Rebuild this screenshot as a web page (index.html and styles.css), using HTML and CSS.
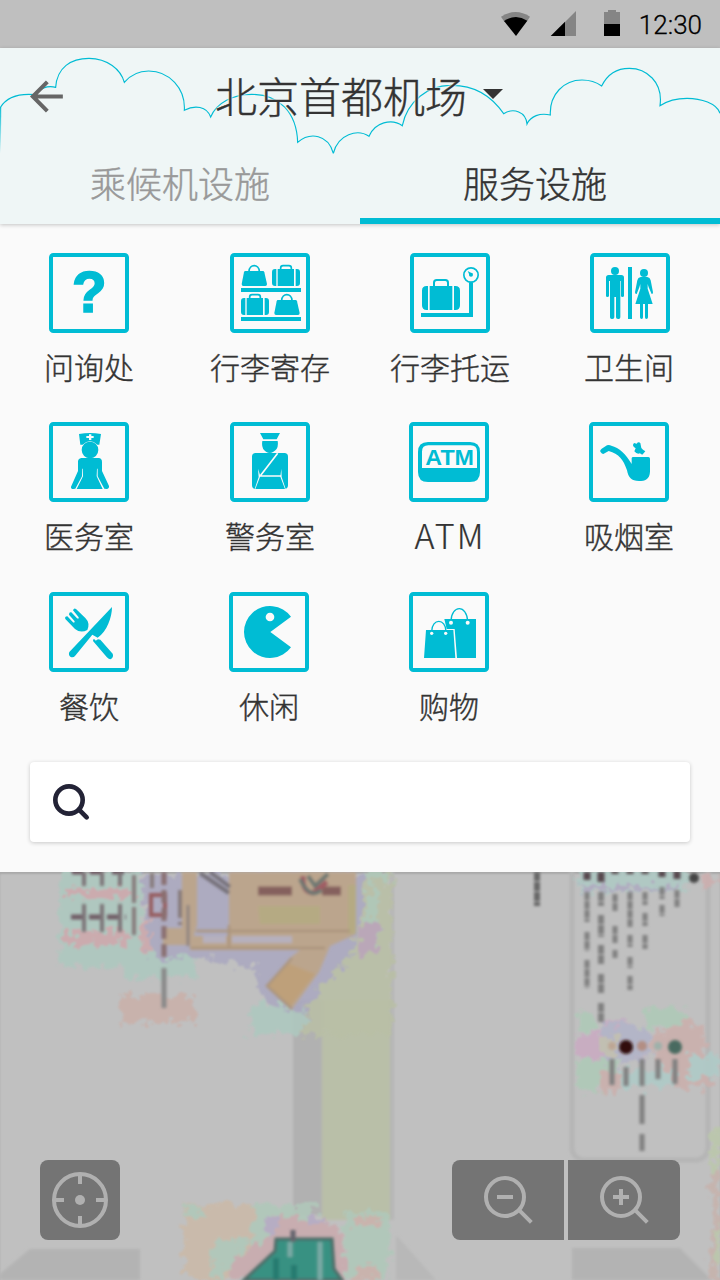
FILE: index.html
```
<!DOCTYPE html>
<html lang="zh-CN">
<head>
<meta charset="utf-8">
<title>北京首都机场</title>
<link rel="stylesheet" href="styles.css">
</head>
<body>
<div class="status">
  <svg class="status-icons" viewBox="1500 0 366 144">
    <path fill="#858585" d="M1503 50Q1547 22 1590 50L1580 65H1513Z"/><path d="M1512 63Q1547 40 1582 62L1548 108Z"/>
    <path fill="#858585" d="M1728 33V108H1695V66Z"/><path d="M1652 108L1695 65V108Z"/>
    <path fill="#858585" d="M1812 36H1824V30H1848V36H1860V72H1812Z"/><path d="M1812 72H1860V108H1812Z"/>
  </svg>
  <span class="time">12:30</span>
</div>
<header class="header">
  <svg class="clouds" viewBox="0 144 2160 528">
    <defs><linearGradient id="fade" gradientUnits="userSpaceOnUse" x1="0" y1="320" x2="0" y2="460"><stop stop-color="#00bcd4"/><stop offset="1" stop-color="#00bcd4" stop-opacity="0"/></linearGradient></defs>
    <path stroke="url(#fade)" d="M1 460L2 322"/>
    <path stroke="#00bcd4" d="M0 324C20 290 60 280 105 284C118 266 142 255 167 262C171 202 213 175 267 175C322 176 362 207 373 247C395 221 420 213 446 213C507 213 557 265 553 331C585 314 620 319 632 351C650 308 700 283 755 283C838 283 890 337 893 427C930 395 985 403 1000 460C1014 402 1073 386 1107 409C1124 367 1175 354 1207 377C1222 303 1286 256 1350 256C1429 254 1478 293 1511 341C1541 322 1578 336 1581 372C1592 348 1620 338 1651 345C1648 283 1692 240 1746 240C1770 240 1790 247 1805 258C1822 223 1853 205 1888 205C1938 205 1990 245 1980 317C2003 302 2031 295 2061 295C2103 295 2150 310 2160 340"/>
  </svg>
  <div class="titlebar">
    <svg class="back" viewBox="90 235 102 106"><path fill="none" stroke="#666" stroke-width="12" d="M142 244L98 288L142 332M98 288H189"/></svg>
    <h1 class="title">北京首都机场</h1>
    <i class="caret"></i>
  </div>
  <nav class="tabs"><a class="tab">乘候机设施</a><a class="tab active">服务设施</a></nav>
</header>
<main class="panel">
  <div class="grid">
    <div class="item left"><svg class="icon" viewBox="57 39 240 240"><rect class="frame" x="63" y="45" width="228" height="228" rx="7"/><text x="178" y="217" text-anchor="middle" class="question">?</text></svg><span>问询处</span></div>
    <div class="item"><svg class="icon" viewBox="600 39 240 240"><rect class="frame" x="606" y="45" width="228" height="228" rx="7"/>
      <path d="M633 144H813V156H633ZM633 231H813V243H633Z"/>
      <g id="bag"><path d="M645 93H699Q702 93 703 97L711 132Q711 138 706 138H640Q635 138 635 132L642 97Q643 93 645 93Z"/><path class="line5" d="M657 94C658 71 687 71 688 94"/></g>
      <g id="case"><path d="M743 87H792V138H743ZM739 87V138H735Q726 138 726 129V96Q726 87 735 87ZM797 87V138H801Q810 138 810 129V96Q810 87 801 87Z"/><path class="line5" d="M752 89V84Q752 77 759 77H777Q784 77 784 84V89"/></g>
      <use href="#bag" x="98" y="87"/><use href="#case" x="-93" y="87"/></svg><span>行李寄存</span></div>
    <div class="item"><svg class="icon" viewBox="60 39 240 240"><rect class="frame" x="66" y="45" width="228" height="228" rx="7"/>
      <path d="M119 138H187V210H119ZM114 138V210H110Q96 210 96 196V152Q96 138 110 138ZM192 138V210H196Q210 210 210 196V152Q210 138 196 138ZM93 219H237V127H249V231H93Z"/><path class="line6" d="M132 140V128Q132 120 140 120H166Q174 120 174 128V140"/><circle class="line5" cx="243" cy="105" r="21.5"/><circle cx="243" cy="104" r="6"/><path d="M233 93L248 101L240 109Z"/></svg><span>行李托运</span></div>
    <div class="item up"><svg class="icon" viewBox="600 39 240 240"><rect class="frame" x="606" y="45" width="228" height="228" rx="7"/>
      <circle cx="675" cy="93" r="12"/><path d="M656 105H694Q702 105 702 113V167Q702 171 697 171Q693 171 693 167V123H691V232Q691 237 686 237H684Q678 237 678 232V171H673V232Q673 237 667 237H665Q660 237 660 232V123H657V167Q657 171 652 171Q648 171 648 167V113Q648 105 656 105ZM714 81H726V237H714Z"/><circle cx="762" cy="99" r="12"/><path d="M752 111H772Q780 112 782 121L789 157Q789 163 785 162L776 142L773 132V146L788 192H774V232Q774 237 769 237Q765 237 765 232V192H759V232Q759 237 755 237Q750 237 750 232V192H736L751 146V132L748 142L740 162Q735 163 735 157L742 121Q744 112 752 111Z"/></svg><span>卫生间</span></div>
    <div class="item left"><svg class="icon" viewBox="57 36 240 240"><rect class="frame" x="63" y="42" width="228" height="228" rx="7"/>
      <path d="M147 72Q180 66 213 72L208 104H202Q180 84 158 104H151ZM154 144H206Q216 145 216 156V183L237 228Q238 236 230 237L223 236L203 199V176H201L200 199L218 237H140L159 199L158 176H156V199L136 236L130 237Q122 237 123 230L144 183V155Q144 146 154 144Z"/><circle cx="180" cy="120" r="25"/><path class="white" d="M177 73H184V78H191V84H184V90H177V84H169V78H177Z"/></svg><span>医务室</span></div>
    <div class="item"><svg class="icon" viewBox="600 36 240 240"><rect class="frame" x="606" y="42" width="228" height="228" rx="7"/>
      <path d="M690 69H750L740 88H700ZM697 93H743Q747 118 729 126Q719 132 708 125Q693 116 697 93ZM677 129H763Q774 129 774 140V226Q774 237 763 237H677Q666 237 666 226V140Q666 129 677 129Z"/><path class="cut" d="M743 130L691 197M687 198H753"/><path class="white" d="M684 176L691 198L676 237H674L686 201ZM754 176L755 201L767 237H765L751 200Z"/></svg><span>警务室</span></div>
    <div class="item left"><svg class="icon" viewBox="57 36 240 240"><rect class="frame" x="63" y="42" width="228" height="228" rx="7"/>
      <path fill-rule="evenodd" d="M114 96H240Q270 96 270 126V186Q270 216 240 216H114Q84 216 84 186V126Q84 96 114 96ZM96 174H261V125Q261 106 242 106H115Q96 106 96 125Z"/><text class="atm" x="106" y="164" textLength="146" lengthAdjust="spacingAndGlyphs">ATM</text></svg><span class="latin">ATM</span></div>
    <div class="item left"><svg class="icon" viewBox="597 36 240 240"><rect class="frame" x="603" y="42" width="228" height="228" rx="7"/>
      <path d="M631 125Q629 121 635 116L651 106Q657 103 664 107C687 112 709 134 725 162V145Q725 141 730 141H775Q780 141 780 146V185C779 208 765 213 747 213C724 213 715 203 711 181C700 148 687 132 656 123L640 132Q636 132 631 125ZM732 99L740 101Q745 94 751 99L754 114Q758 120 766 124L759 132Q757 136 750 130Q741 134 733 124L737 115Q724 108 732 99Z"/></svg><span>吸烟室</span></div>
    <div class="item left"><svg class="icon" viewBox="57 36 240 240"><rect class="frame" x="63" y="42" width="228" height="228" rx="7"/>
      <path d="M246 81C246 111 231 155 203 173L187 164L135 228Q130 234 122 231Q114 225 118 216ZM129 91Q132 83 138 87L166 114Q181 129 172 150Q152 161 135 147L106 117Q103 110 112 109L129 127Q134 130 134 124L117 104Q117 95 124 97L141 115Q147 118 146 112ZM189 183L190 178Q195 176 197 182L204 178L211 179L248 221Q252 230 243 237Q236 239 230 231Z"/></svg><span>餐饮</span></div>
    <div class="item left"><svg class="icon" viewBox="597 36 240 240"><rect class="frame" x="603" y="42" width="228" height="228" rx="7"/><path d="M721 156L783 110A78 78 0 1 0 783 202Z"/><circle class="white" cx="720" cy="111" r="13"/></svg><span>休闲</span></div>
    <div class="item left"><svg class="icon" viewBox="57 36 240 240"><rect class="frame" x="63" y="42" width="228" height="228" rx="7"/>
      <path d="M163 117H258V234H201L194 147H170ZM108 150H190L196 234H102Z"/><path class="line4" d="M125 154C126 114 167 114 168 154M183 124C184 74 231 73 233 124"/><circle class="white" cx="125" cy="160" r="5"/><circle class="white" cx="167" cy="160" r="5"/><circle class="white" cx="183" cy="128" r="6"/><circle class="white" cx="233" cy="128" r="6"/></svg><span>购物</span></div>
  </div>
  <div class="search"><svg viewBox="156 129 114 114"><circle cx="207" cy="180" r="41" fill="none" stroke="#232336" stroke-width="14"/><path stroke="#232336" stroke-width="14" stroke-linecap="round" d="M237 209L260 232"/></svg></div>
</main>
<section class="map">
  <svg class="map-art" viewBox="0 872 720 408" preserveAspectRatio="none">
    <defs>
      <filter id="soft" x="-10%" y="-10%" width="120%" height="120%"><feGaussianBlur stdDeviation="1.6"/></filter>
      <filter id="wash" x="-10%" y="-10%" width="120%" height="120%"><feTurbulence type="fractalNoise" baseFrequency=".12" numOctaves="3" seed="4" result="n"/><feDisplacementMap in="SourceGraphic" in2="n" scale="22" xChannelSelector="R" yChannelSelector="G"/><feGaussianBlur stdDeviation="1.3"/></filter>
    </defs>
    <g filter="url(#soft)">
      <path fill="#b1b1b1" d="M293 1000H322V1215H293Z"/><path fill="#b9bfa8" d="M322 1000H390V1220H322Z"/><path fill="#b6b6b6" d="M390 872H394V1220H390Z"/>
      <path fill="#b3b3b3" d="M30 1249H140V1280H0V1274ZM572 1248H680L712 1280H572Z"/><path fill="#b8b8b8" d="M396 1235L436 1280H396Z"/>
      <rect x="572" y="852" width="136" height="308" rx="12" fill="none" stroke="#b5b5b5" stroke-width="5"/>
    </g>
    <g filter="url(#wash)" opacity=".9">
      <path fill="#aec8bf" d="M60 872H142V968H60ZM120 948H196V978H124ZM251 1004H306V1034H251ZM338 935H374V963H338Z"/>
      <path fill="#cda9ad" d="M66 888H132V898H66ZM64 931H128V945H64ZM140 920H151V952H140Z"/>
      <path fill="#c9b1aa" d="M120 996H194V1023H120Z"/>
      <path fill="#aba9c0" d="M140 875H370L355 950L344 974L303 1012L262 1000L254 968L205 958H152Z"/>
      <path fill="#b9bfa6" d="M364 872H392V1035H300L320 988L348 960L362 920Z"/>
      <path fill="#afc8b7" d="M363 872H390V882H363ZM366 890H379V945H366Z"/>
      <path fill="#baa5b8" d="M358 935L365 921H378V955H358Z"/>
      <path fill="#afc9c4" d="M578 868H687V892H578Z"/><path fill="#afabc1" d="M581 886H676V891H581Z"/><path fill="#cdafaf" d="M704 873H714V890H704Z"/>
      <path fill="#c9abc2" d="M577 1035L597 1032L606 1021H632L650 1035V1056L627 1062L577 1058Z"/>
      <path fill="#b2b4c8" d="M602 1025L632 1022L651 1034V1055L625 1063L602 1059Z"/>
      <path fill="#c2bfb1" d="M598 1036H617V1056H598Z"/>
      <path fill="#afc9b8" d="M577 1012H596V1031H577ZM645 1008H685V1028H645ZM577 1060H620V1090H577Z"/>
      <path fill="#cbb0ad" d="M652 1034L689 1021L705 1030V1054L714 1061V1087H674L666 1071L652 1062ZM600 1070H620V1091H600Z"/>
      <path fill="#afcac7" d="M689 1056H718V1078H689ZM620 1069H674V1087H620Z"/>
      <path fill="#cbbaa9" d="M184 1204H295V1230L255 1250L226 1280H184Z"/><path fill="#b0c8ba" d="M185 1206H206V1217H185ZM212 1239H250L237 1260L213 1280ZM345 1212H389V1280H345ZM255 1204H315V1235L250 1250Z"/>
      <path fill="#c9acaf" d="M229 1264L266 1237L276 1216L328 1219L344 1238L345 1280H229Z"/><path fill="#b6abc4" d="M265 1220L272 1214L280 1229L269 1240ZM306 1217H325V1224H306Z"/><path fill="#cbb2ac" d="M355 1216H378V1228H355ZM355 1266H378V1280H355Z"/>
      <path fill="#c6b3ad" d="M711 1170H720V1280H711Z"/><path fill="#bbc7ac" d="M712 1130H720V1170H712ZM715 1226H720V1265H715Z"/>
    </g>
    <g filter="url(#soft)">
      <path fill="#bba58d" d="M229 872H356V934L330 946L319 972L292 1009L267 986L290 958L300 950H190V936H229ZM182 872H197V925L191 945H163V928H182Z"/>
      <path fill="#b5aa83" d="M258 906H320V924H260ZM348 885H356V934H348Z"/><path fill="#bea07a" d="M287 963L315 974L290 1007L268 986Z"/>
      <path fill="#b6b0bd" d="M203 936H226V943H203ZM232 936H292V943H232Z"/>
      <g fill="none" stroke="#ab947d" stroke-width="2.5"><path d="M196 931H350M190 948H325M292 958L267 986L292 1009M229 925V948"/></g>
      <g stroke="#705d66" stroke-width="5"><path d="M72 872H83M90 872H102M112 872H124"/><path d="M71 917H126" stroke-dasharray="11 7"/><path stroke-width="4" stroke="#7d7478" d="M84 872V886M102 872V886M120 872V886M84 904V932M102 904V932M120 904V932"/></g>
      <path stroke="#867a7b" stroke-width="4" stroke-dasharray="28 4" d="M134 875V936M152 873V888M180 890V925"/>
      <path fill="none" stroke="#965d60" stroke-width="4" d="M151 895H165V915H151Z"/><path stroke="#896e70" stroke-width="5" stroke-dasharray="13 5" d="M164 872V962"/><path stroke="#898989" stroke-width="5" d="M164 968V1008"/>
      <path stroke="#747078" stroke-width="4" d="M200 873L229 893M210 872L230 887"/><path stroke="#8e8380" stroke-width="3" d="M188 905V946"/>
      <path stroke="#85615d" stroke-width="9" d="M258 891H292M322 891H341"/><path fill="none" stroke="#a05b64" stroke-width="5" d="M303 876Q302 892 313 893L327 882"/><path fill="none" stroke="#6d7872" stroke-width="4" d="M308 876L315 886L328 874M300 879Q310 900 321 890"/>
      <g fill="none" stroke="#808080" stroke-width="5">
        <path stroke="#666" stroke-width="6" stroke-dasharray="9 1" d="M537 872V906"/><path d="M587 892V922M587 932V951M587 960V988" stroke-dasharray="8 1"/><path stroke-width="6" d="M601 892V906M601 915V937M601 945V965M601 974V993M601 1003V1022" stroke-dasharray="9 1"/><path d="M615 894V912M615 926V944M615 950V958M630 892V927M630 935V947M630 957V968M630 976V990M645 892V905M645 913V926M645 935V949M662 887V899M662 905V916M677 890V908" stroke-dasharray="8 1"/>
        <path stroke="#56464e" stroke-width="7" d="M587 872V880M601 872V882M615 871V874M630 871V874M645 871V874M662 871V877M677 871V879"/><path stroke-width="5" d="M612 1059V1085M626 1067V1086M642 1059V1086M658 1059V1079M675 1059V1084M642 1095V1124M642 1134V1151"/>
      </g>
      <circle cx="694" cy="878" r="5" fill="#444"/><circle cx="612" cy="1046" r="4" fill="#bda694"/><circle cx="626" cy="1047" r="7" fill="#301009"/><circle cx="642" cy="1046" r="5" fill="#b38e83"/><circle cx="658" cy="1046" r="4" fill="#9db1aa"/><circle cx="675" cy="1047" r="7" fill="#496b60"/>
      <path fill="#399182" stroke="#4b6b66" stroke-width="3" d="M276 1239H332L334 1269L342 1280H244L275 1251Z"/><path stroke="#65656d" stroke-width="5" d="M293 1230V1242"/><path stroke="#7aaaa5" stroke-width="5" d="M290 1242V1257M320 1242V1280"/><path stroke="#277a70" stroke-width="6" d="M276 1258V1280M294 1265V1280"/>
    </g>
  </svg>
  <div class="controls">
    <button class="control locate"><svg viewBox="120 420 240 240"><g fill="none" stroke="#b0b0b0" stroke-width="12"><circle cx="240" cy="540" r="78"/><path d="M240 462V492M240 588V618M162 540H192M288 540H318"/></g><circle cx="240" cy="540" r="15" fill="#b0b0b0"/></svg></button>
    <div class="zoom">
      <button class="control minus"><svg viewBox="156 120 336 240"><g fill="none" stroke="#b0b0b0" stroke-width="12"><circle cx="315" cy="231" r="57"/><path d="M358 271L394 307M291 231H339"/></g></svg></button>
      <button class="control plus"><svg viewBox="504 120 336 240"><g fill="none" stroke="#b0b0b0" stroke-width="12"><circle cx="663" cy="231" r="57"/><path d="M706 271L742 307M639 231H687M663 207V255"/></g></svg></button>
    </div>
  </div>
</section>
</body>
</html>
```
FILE: styles.css
```
* { box-sizing: border-box; }
body { margin: 0; width: 720px; height: 1280px; overflow: hidden; background: #fafafa; color: #333; font-family: "Noto Sans CJK SC", "Noto Sans", sans-serif; font-weight: 300; }
svg { display: block; }
.status { height: 48px; background: #bfbfbf; display: flex; align-items: center; justify-content: flex-end; padding-right: 18px; }
.status-icons { width: 122px; height: 48px; margin-right: 14px; }
.time { font: 300 26px/48px Roboto, sans-serif; color: #000; width: 66px; text-align: right; padding-top: 1px; -webkit-text-stroke: .3px #000; }
.header { position: relative; z-index: 1; height: 176px; background: #eff6f6; box-shadow: 0 1px 4px rgba(0,0,0,.22); }
.clouds { position: absolute; inset: 0; width: 720px; height: 176px; }
.clouds path { fill: none; stroke-width: 3.4; }
.titlebar { position: relative; height: 96px; display: flex; align-items: center; padding-left: 30px; }
.back { width: 34px; height: 35px; }
.title { margin: 0 16px 2px 151px; font-size: 42px; line-height: 60px; font-weight: 300; text-shadow: 0 0 2px #eff6f6, 0 0 2px #eff6f6, 0 0 3px #eff6f6; }
.title, .tab, .item span { -webkit-text-stroke: .4px currentColor; }
.caret { margin-bottom: 4px; border: 10px solid transparent; border-top-color: #333; border-bottom: 0; }
.tabs { position: relative; display: grid; grid-template-columns: 1fr 1fr; height: 80px; }
.tab { font-size: 36px; line-height: 76px; text-align: center; color: #999; border-bottom: 6px solid transparent; height: 80px; }
.tab.active { color: #333; padding-right: 10px; border-color: #00bcd4; }
.panel { height: 648px; background: #fafafa; padding-top: 29px; }
.grid { display: grid; grid-template-columns: repeat(4, 180px); grid-template-rows: 169px 170px 170px; }
.item { display: flex; flex-direction: column; align-items: center; gap: 15px; font-size: 30px; line-height: 36px; }
.item.left { padding-right: 2px; }
.up span { margin-right: 2px; }
.item .latin { font-size: 34px; letter-spacing: 2px; margin-right: -2px; -webkit-text-stroke-width: .2px; }
.icon { width: 80px; height: 80px; fill: #00bcd4; }
.icon .frame, .line4, .line5, .line6 { fill: none; stroke: #00bcd4; }
.icon .frame { stroke-width: 12; }
.icon .line4 { fill: none; stroke-width: 4; }
.icon .line5 { fill: none; stroke-width: 5; }
.icon .line6 { fill: none; stroke-width: 6; }
.icon .white { fill: #fafafa; }
.icon .cut { fill: none; stroke: #fafafa; stroke-width: 5; }
.question { font: bold 170px "Liberation Sans", sans-serif; stroke: #00bcd4; stroke-width: 5; }
.atm { font: bold 67px "Liberation Sans", sans-serif; }
.search { width: 660px; height: 80px; margin: 0 30px; padding: 21px 22px; background: #fff; border-radius: 4px; box-shadow: 0 1px 4px rgba(0,0,0,.2); }
.search svg { width: 38px; height: 38px; }
.map { position: relative; height: 408px; padding: 288px 40px 40px; background: #c0c0c0; box-shadow: inset 0 2px 2px rgba(0,0,0,.12); }
.map-art { position: absolute; inset: 0; width: 720px; height: 408px; }
.controls { position: relative; display: flex; justify-content: space-between; }
.control { border: 0; padding: 0; height: 80px; background: #747474; border-radius: 8px; }
.control svg { width: 100%; height: 80px; }
.locate { width: 80px; }
.zoom { display: flex; gap: 4px; }
.minus, .plus { width: 112px; }
.minus { border-radius: 8px 0 0 8px; }
.plus { border-radius: 0 8px 8px 0; }
```
